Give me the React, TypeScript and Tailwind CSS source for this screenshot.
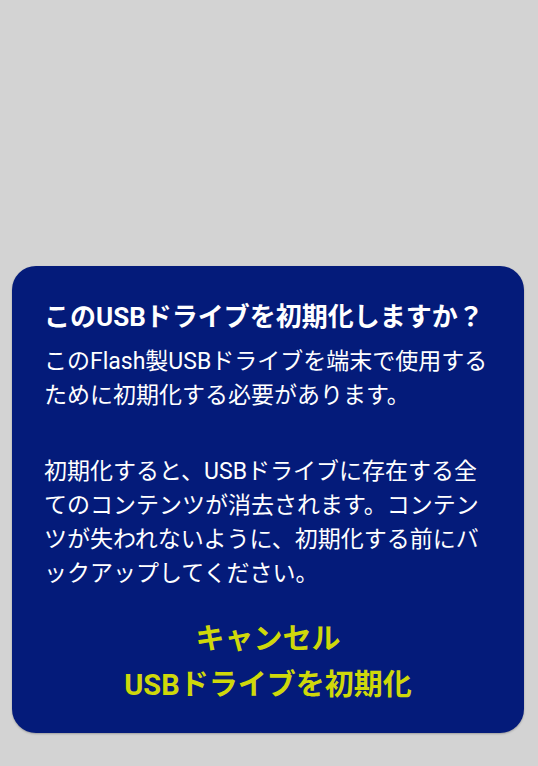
export default function App() {
  return (
    <div
      className="flex h-[766px] w-full flex-col justify-end bg-[#d3d3d3] pb-[33px] pl-[12px]"
      style={{ fontFamily: 'Roboto, "Noto Sans CJK JP", sans-serif' }}
    >
      <div className="h-[467px] w-[512px] rounded-[24px] bg-[#041b7a] px-[32px] pt-[35px] shadow-[0_1px_2px_rgba(0,0,0,0.25)]">
        <h1 className="text-[26px] font-bold leading-[32px] text-white">
          このUSBドライブを初期化しますか？
        </h1>
        <div className="mt-[12px] text-[23px] leading-[34px] text-white">
          <p>このFlash製USBドライブを端末で使用するために初期化する必要があります。</p>
          <p className="mt-[42px]">
            初期化すると、USBドライブに存在する全てのコンテンツが消去されます。コンテンツが失われないように、初期化する前にバックアップしてください。
          </p>
        </div>
        <div className="mt-[25px] flex flex-col items-center text-[29px] font-bold leading-[46px] text-[#cfd80a]">
          <button type="button">キャンセル</button>
          <button type="button">USBドライブを初期化</button>
        </div>
      </div>
    </div>
  )
}
